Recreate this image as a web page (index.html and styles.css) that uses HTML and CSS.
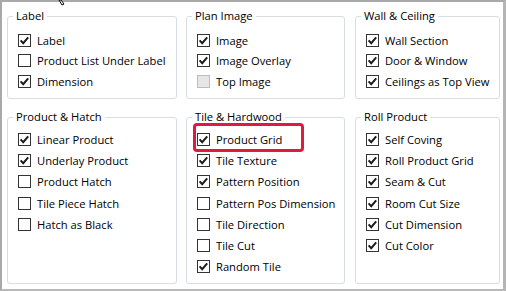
FILE: index.html
```html
<!DOCTYPE html>
<html lang="en">
<head>
    <meta charset="UTF-8">
    <meta name="viewport" content="width=device-width, initial-scale=1.0">
    <title>Display Options</title>
    <link rel="stylesheet" href="styles.css">
</head>
<body>
    <div class="window">
        <svg class="cursor" width="10" height="6" viewBox="0 0 10 6">
            <path d="M1 0 L4 5 L6 4 L3 0 Z" fill="#fff" stroke="#000" stroke-width="1"/>
        </svg>
        <div class="panels">
            <fieldset class="group short">
                <legend>Label</legend>
                <ul class="options">
                    <li class="on"><span class="box"><svg viewBox="0 0 13 13"><path d="M2.6 6.4 L5.2 9.2 L10.2 3.4"/></svg></span>Label</li>
                    <li><span class="box"></span>Product List Under Label</li>
                    <li class="on"><span class="box"><svg viewBox="0 0 13 13"><path d="M2.6 6.4 L5.2 9.2 L10.2 3.4"/></svg></span>Dimension</li>
                </ul>
            </fieldset>
            <fieldset class="group short">
                <legend>Plan Image</legend>
                <ul class="options">
                    <li class="on"><span class="box"><svg viewBox="0 0 13 13"><path d="M2.6 6.4 L5.2 9.2 L10.2 3.4"/></svg></span>Image</li>
                    <li class="on"><span class="box"><svg viewBox="0 0 13 13"><path d="M2.6 6.4 L5.2 9.2 L10.2 3.4"/></svg></span>Image Overlay</li>
                    <li class="off"><span class="box"></span>Top Image</li>
                </ul>
            </fieldset>
            <fieldset class="group short">
                <legend>Wall &amp; Ceiling</legend>
                <ul class="options">
                    <li class="on"><span class="box"><svg viewBox="0 0 13 13"><path d="M2.6 6.4 L5.2 9.2 L10.2 3.4"/></svg></span>Wall Section</li>
                    <li class="on"><span class="box"><svg viewBox="0 0 13 13"><path d="M2.6 6.4 L5.2 9.2 L10.2 3.4"/></svg></span>Door &amp; Window</li>
                    <li class="on"><span class="box"><svg viewBox="0 0 13 13"><path d="M2.6 6.4 L5.2 9.2 L10.2 3.4"/></svg></span>Ceilings as Top View</li>
                </ul>
            </fieldset>

            <fieldset class="group tall">
                <legend>Product &amp; Hatch</legend>
                <ul class="options">
                    <li class="on"><span class="box"><svg viewBox="0 0 13 13"><path d="M2.6 6.4 L5.2 9.2 L10.2 3.4"/></svg></span>Linear Product</li>
                    <li class="on"><span class="box"><svg viewBox="0 0 13 13"><path d="M2.6 6.4 L5.2 9.2 L10.2 3.4"/></svg></span>Underlay Product</li>
                    <li><span class="box"></span>Product Hatch</li>
                    <li><span class="box"></span>Tile Piece Hatch</li>
                    <li><span class="box"></span>Hatch as Black</li>
                </ul>
            </fieldset>
            <fieldset class="group tall">
                <legend>Tile &amp; Hardwood</legend>
                <ul class="options">
                    <li class="on marked"><span class="box"><svg viewBox="0 0 13 13"><path d="M2.6 6.4 L5.2 9.2 L10.2 3.4"/></svg></span>Product Grid</li>
                    <li class="on"><span class="box"><svg viewBox="0 0 13 13"><path d="M2.6 6.4 L5.2 9.2 L10.2 3.4"/></svg></span>Tile Texture</li>
                    <li class="on"><span class="box"><svg viewBox="0 0 13 13"><path d="M2.6 6.4 L5.2 9.2 L10.2 3.4"/></svg></span>Pattern Position</li>
                    <li><span class="box"></span>Pattern Pos Dimension</li>
                    <li><span class="box"></span>Tile Direction</li>
                    <li><span class="box"></span>Tile Cut</li>
                    <li class="on"><span class="box"><svg viewBox="0 0 13 13"><path d="M2.6 6.4 L5.2 9.2 L10.2 3.4"/></svg></span>Random Tile</li>
                </ul>
            </fieldset>
            <fieldset class="group tall">
                <legend>Roll Product</legend>
                <ul class="options">
                    <li class="on"><span class="box"><svg viewBox="0 0 13 13"><path d="M2.6 6.4 L5.2 9.2 L10.2 3.4"/></svg></span>Self Coving</li>
                    <li class="on"><span class="box"><svg viewBox="0 0 13 13"><path d="M2.6 6.4 L5.2 9.2 L10.2 3.4"/></svg></span>Roll Product Grid</li>
                    <li class="on"><span class="box"><svg viewBox="0 0 13 13"><path d="M2.6 6.4 L5.2 9.2 L10.2 3.4"/></svg></span>Seam &amp; Cut</li>
                    <li class="on"><span class="box"><svg viewBox="0 0 13 13"><path d="M2.6 6.4 L5.2 9.2 L10.2 3.4"/></svg></span>Room Cut Size</li>
                    <li class="on"><span class="box"><svg viewBox="0 0 13 13"><path d="M2.6 6.4 L5.2 9.2 L10.2 3.4"/></svg></span>Cut Dimension</li>
                    <li class="on"><span class="box"><svg viewBox="0 0 13 13"><path d="M2.6 6.4 L5.2 9.2 L10.2 3.4"/></svg></span>Cut Color</li>
                </ul>
            </fieldset>
        </div>
    </div>
</body>
</html>
```

FILE: styles.css
```css
* {
    box-sizing: border-box;
}
body {
    margin: 0;
    font-family: "Open Sans", "Noto Sans", sans-serif;
    font-size: 11.2px;
    color: #000;
    background-color: #fff;
}
.window {
    position: relative;
    width: 506px;
    height: 291px;
    border-top: 2px solid #a9a9a9;
    border-left: 2px solid #a9a9a9;
    border-right: 3px solid #b4b4b4;
    border-bottom: 2px solid #b9b9b9;
    padding: 6px 5px 5px 5px;
    background-color: #fff;
}
.cursor {
    position: absolute;
    left: 56px;
    top: -2px;
}
.panels {
    display: grid;
    grid-template-columns: 170px 159px 146px;
    grid-template-rows: 91px 175px;
    column-gap: 9px;
    row-gap: 10px;
}
.panels .group:nth-child(3n) {
    margin-left: 1px;
    width: 145px;
}
.group {
    margin: 0;
    padding: 0 5px;
    min-width: 0;
    height: 100%;
    border: 1px solid #d6dde3;
    border-radius: 3px;
}
.group legend {
    padding: 0 3px;
    line-height: 16px;
    font-size: 11.2px;
}
.options {
    list-style: none;
    margin: 0;
    padding: 6px 0 0 5px;
}
.tall .options {
    padding-top: 4px;
}
.options li {
    position: relative;
    display: flex;
    align-items: center;
    height: 20.5px;
    white-space: nowrap;
}
.tall .options li {
    height: 21.2px;
}
.box {
    flex: none;
    width: 13px;
    height: 13px;
    margin-right: 6px;
    border: 1px solid #333;
    background-color: #fff;
    position: relative;
}
.box svg {
    position: absolute;
    left: -1px;
    top: -1px;
    width: 13px;
    height: 13px;
    fill: none;
    stroke: #1b1b1b;
    stroke-width: 2;
}
.off .box {
    background-color: #e6e6e6;
    border-color: #bcbcbc;
}
.marked::after {
    content: "";
    position: absolute;
    left: -4px;
    top: -6px;
    width: 105px;
    height: 23px;
    border: 3px solid #e2193f;
    border-radius: 4px;
}
```
